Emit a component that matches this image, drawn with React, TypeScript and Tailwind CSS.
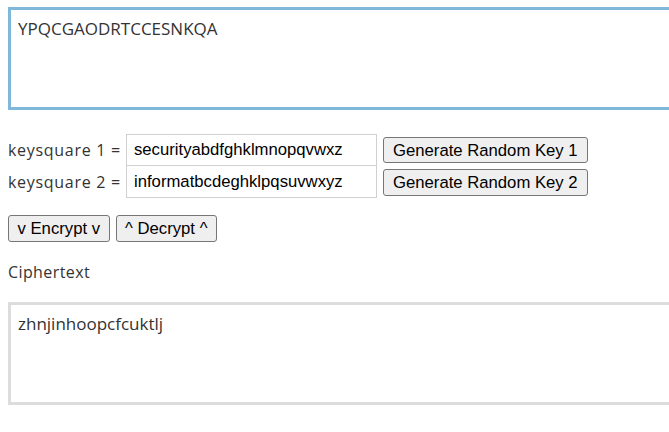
import { useState } from 'react';

const labelFont = { fontFamily: '"Open Sans", "Noto Sans", sans-serif' };

const App = () => {
  const [plain, setPlain] = useState('YPQCGAODRTCCESNKQA');
  const [key1, setKey1] = useState('securityabdfghklmnopqvwxz');
  const [key2, setKey2] = useState('informatbcdeghklpqsuvwxyz');
  const [cipher, setCipher] = useState('zhnjinhoopcfcuktlj');

  return (
    <div className="h-screen w-screen overflow-hidden bg-white">
      <div className="px-2 pt-[7px]">
        <textarea
          value={plain}
          onChange={(e) => setPlain(e.target.value)}
          className="block h-[103px] w-[700px] resize-none border-[3px] border-[#7fb8d8] px-[7px] py-[6px] text-[17px] text-[#333] outline-none"
          style={labelFont}
        />

        <div className="mt-6 flex flex-col">
          <div className="flex items-center">
            <span className="w-[118px] text-[16px] tracking-[0.7px] text-[#333]" style={labelFont}>
              keysquare 1 =
            </span>
            <input
              value={key1}
              onChange={(e) => setKey1(e.target.value)}
              className="h-8 w-[251px] border border-[#d0d0d0] px-[7px] font-['Liberation_Sans'] text-[16.7px] text-black outline-none"
            />
            <button className="ml-[6px] h-[26px] rounded-[3px] border border-[#767676] bg-[#efefef] px-[9px] font-['Liberation_Sans'] text-[16.7px] text-black">
              Generate Random Key 1
            </button>
          </div>
          <div className="flex items-center">
            <span className="w-[118px] text-[16px] tracking-[0.7px] text-[#333]" style={labelFont}>
              keysquare 2 =
            </span>
            <input
              value={key2}
              onChange={(e) => setKey2(e.target.value)}
              className="h-8 w-[251px] border border-t-0 border-[#d0d0d0] px-[7px] font-['Liberation_Sans'] text-[16.7px] text-black outline-none"
            />
            <button className="ml-[6px] h-[27px] rounded-[3px] border border-[#767676] bg-[#efefef] px-[9px] font-['Liberation_Sans'] text-[16.7px] text-black">
              Generate Random Key 2
            </button>
          </div>
        </div>

        <div className="mt-[17px] flex gap-[6px]">
          <button className="h-[27px] rounded-[3px] border border-[#767676] bg-[#efefef] px-[8.5px] font-['Liberation_Sans'] text-[16.7px] text-black">
            v Encrypt v
          </button>
          <button className="h-[27px] rounded-[3px] border border-[#767676] bg-[#efefef] px-[8.5px] font-['Liberation_Sans'] text-[16.7px] text-black">
            ^ Decrypt ^
          </button>
        </div>

        <p className="mt-[18px] text-[16px] tracking-[0.4px] text-[#333]" style={labelFont}>
          Ciphertext
        </p>

        <textarea
          value={cipher}
          onChange={(e) => setCipher(e.target.value)}
          className="mt-[18px] block h-[103px] w-[700px] resize-none border-[3px] border-[#dcdcdc] px-[7px] py-[6px] text-[17px] text-[#333] outline-none"
          style={labelFont}
        />
      </div>
    </div>
  );
};

export default App;
